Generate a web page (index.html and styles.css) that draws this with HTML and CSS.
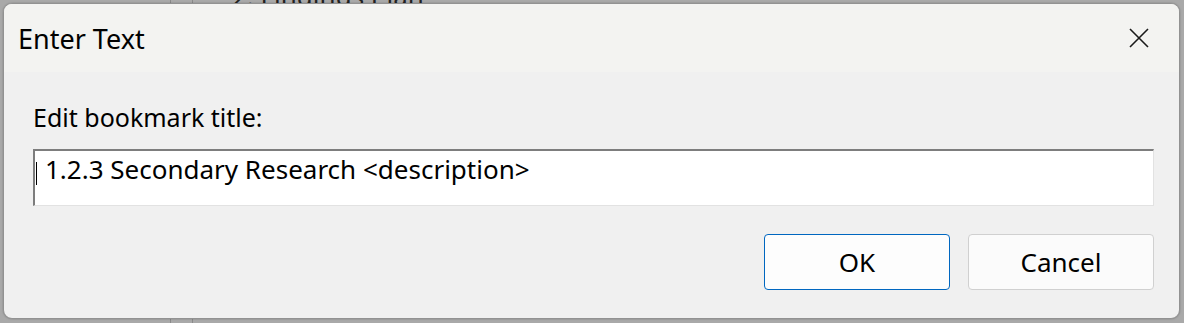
FILE: index.html
```html
<!DOCTYPE html>
<html>
<head>
<meta charset="utf-8">
<link rel="stylesheet" href="styles.css">
</head>
<body>
<div class="desktop">
  <div class="behind-text">2. Findings Plan</div>
  <div class="behind-line l1"></div>
  <div class="behind-line l2"></div>
  <div class="dialog">
    <div class="titlebar">
      <span class="title">Enter Text</span>
      <span class="close">
        <svg width="20" height="20" viewBox="0 0 20 20"><path d="M1 1 L19 19 M19 1 L1 19" stroke="#1a1a1a" stroke-width="1.6" fill="none"/></svg>
      </span>
    </div>
    <div class="content">
      <div class="label">Edit bookmark title:</div>
      <div class="field">
        <span class="caret"></span>
        <span class="value">1.2.3 Secondary Research &lt;description&gt;</span>
      </div>
      <div class="buttons">
        <div class="btn btn-default">OK</div>
        <div class="btn">Cancel</div>
      </div>
    </div>
  </div>
</div>
</body>
</html>
```
FILE: styles.css
```css
html, body {
  margin: 0;
  padding: 0;
}
body {
  width: 1184px;
  height: 323px;
  overflow: hidden;
  background: #a9a9a9;
  font-family: "Noto Sans", "Open Sans", sans-serif;
  color: #000;
}
.desktop {
  position: relative;
  width: 1184px;
  height: 323px;
}
.behind-text {
  position: absolute;
  left: 232px;
  top: -22px;
  font-size: 26px;
  color: #222;
}
.behind-line {
  position: absolute;
  width: 1px;
  height: 323px;
  background: #8a8a8a;
}
.behind-line.l1 { left: 170px; }
.behind-line.l2 { left: 192px; }
.dialog {
  position: absolute;
  left: 3px;
  top: 3px;
  width: 1175px;
  height: 314px;
  border: 1px solid #929292;
  border-radius: 9px;
  background: #f0f0f0;
  overflow: hidden;
  display: flex;
  flex-direction: column;
  box-shadow: 0 0 2px rgba(0,0,0,0.25);
}
.titlebar {
  height: 68px;
  flex: none;
  background: #f3f3f1;
  display: flex;
  align-items: center;
  justify-content: space-between;
  padding: 0 30px 0 14px;
}
.title {
  font-size: 27px;
  line-height: 36px;
  margin-top: 2px;
}
.close {
  display: flex;
  width: 20px;
  height: 20px;
}
.content {
  padding: 30px 25px 0 29px;
  display: flex;
  flex-direction: column;
}
.label {
  font-size: 25px;
  line-height: 30px;
}
.field {
  margin-top: 17px;
  background: #fff;
  border-top: 2px solid #7d7d7d;
  border-left: 2px solid #7d7d7d;
  border-right: 1px solid #e2e2e2;
  border-bottom: 1px solid #e2e2e2;
  display: flex;
  align-items: flex-start;
  padding: 5px 0 0 1px;
  box-sizing: border-box;
  height: 57px;
}
.caret {
  width: 1px;
  height: 23px;
  background: #000;
  margin-top: 6px;
  margin-right: 8px;
  flex: none;
}
.value {
  font-size: 26px;
  line-height: 26px;
}
.buttons {
  margin-top: 28px;
  display: flex;
  justify-content: flex-end;
  gap: 18px;
}
.btn {
  width: 184px;
  height: 54px;
  border: 1px solid #d0d0d0;
  border-radius: 4px;
  background: #fbfbfb;
  display: flex;
  align-items: center;
  justify-content: center;
  font-size: 26px;
  box-sizing: content-box;
}
.btn-default {
  border-color: #0067c0;
  background: #fdfdfd;
}
```
